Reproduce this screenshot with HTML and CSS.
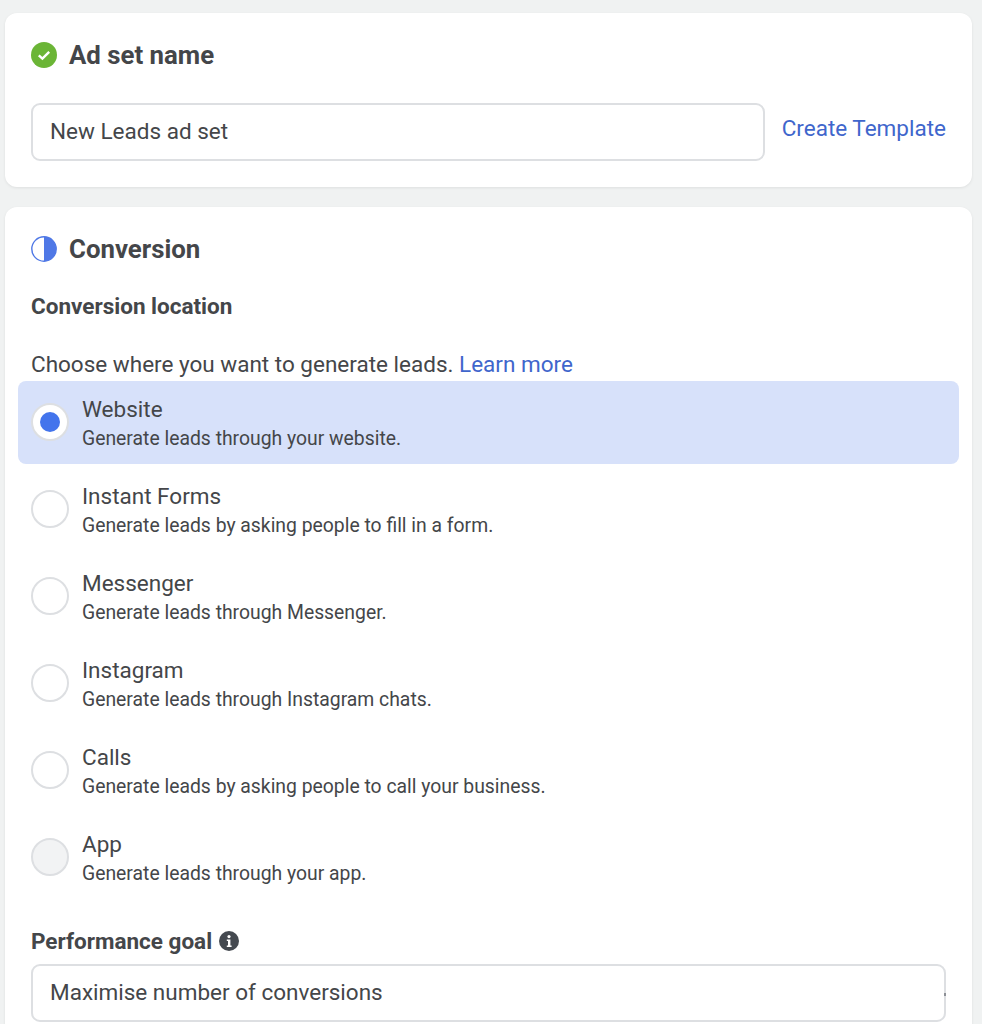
FILE: index.html
```html
<!DOCTYPE html>
<html lang="en">
<head>
  <meta charset="UTF-8" />
  <meta name="viewport" content="width=device-width, initial-scale=1.0" />
  <title>Ad set</title>
  <link rel="stylesheet" href="styles.css">
</head>
<body>
  <div class="card card-name">
    <div class="card-title">
      <svg class="title-icon" viewBox="0 0 26 26">
        <circle cx="13" cy="13" r="13" fill="#6bb536" />
        <path d="M7.8 13.4l3.6 3.3 6.8-6.8" fill="none" stroke="#fff" stroke-width="2.4" />
      </svg>
      <h2>Ad set name</h2>
    </div>
    <div class="name-row">
      <div class="field">New Leads ad set</div>
      <a class="link template-link">Create Template</a>
    </div>
  </div>

  <div class="card card-conversion">
    <div class="card-title">
      <svg class="title-icon" viewBox="0 0 26 26">
        <circle cx="13" cy="13" r="12.2" fill="#fff" stroke="#4f78e6" stroke-width="1.4" />
        <path d="M13 0.8a12.2 12.2 0 0 1 0 24.4z" fill="#4f78e6" />
      </svg>
      <h2>Conversion</h2>
    </div>

    <h3 class="location-label">Conversion location</h3>
    <p class="hint">Choose where you want to generate leads. <a class="link">Learn more</a></p>

    <!-- Location options -->
    <div class="options">
      <div class="option selected">
        <span class="radio"></span>
        <div class="option-text">
          <div class="option-name">Website</div>
          <div class="option-desc">Generate leads through your website.</div>
        </div>
      </div>
      <div class="option">
        <span class="radio"></span>
        <div class="option-text">
          <div class="option-name">Instant Forms</div>
          <div class="option-desc">Generate leads by asking people to fill in a form.</div>
        </div>
      </div>
      <div class="option">
        <span class="radio"></span>
        <div class="option-text">
          <div class="option-name">Messenger</div>
          <div class="option-desc">Generate leads through Messenger.</div>
        </div>
      </div>
      <div class="option">
        <span class="radio"></span>
        <div class="option-text">
          <div class="option-name">Instagram</div>
          <div class="option-desc">Generate leads through Instagram chats.</div>
        </div>
      </div>
      <div class="option">
        <span class="radio"></span>
        <div class="option-text">
          <div class="option-name">Calls</div>
          <div class="option-desc">Generate leads by asking people to call your business.</div>
        </div>
      </div>
      <div class="option">
        <span class="radio disabled"></span>
        <div class="option-text">
          <div class="option-name">App</div>
          <div class="option-desc">Generate leads through your app.</div>
        </div>
      </div>
    </div>

    <div class="goal-label">
      <h3>Performance goal</h3>
      <svg class="info-icon" viewBox="0 0 20 20">
        <circle cx="10" cy="10" r="10" fill="#444950" />
        <circle cx="10" cy="5.6" r="1.6" fill="#fff" />
        <path d="M7.8 8.6h3.6v6h1.2v1.5H7.8v-1.5h1.2v-4.5H7.8z" fill="#fff" />
      </svg>
    </div>
    <div class="field goal-field">Maximise number of conversions</div>
  </div>
</body>
</html>
```

FILE: styles.css
```css
body {
  font-family: Roboto, "Liberation Sans", sans-serif;
  margin: 0;
  padding: 13px 10px 0 5px;
  height: 1011px;
  overflow: hidden;
  background: #f0f2f2;
  color: #444649;
}
.card {
  background: #fff;
  border-radius: 12px;
  box-shadow: 0 1px 3px rgba(0, 0, 0, 0.08);
  padding: 0 26px;
}
.card-name {
  height: 174px;
  margin-bottom: 20px;
}
.card-conversion {
  padding-bottom: 30px;
}
.card-title {
  display: flex;
  align-items: center;
  gap: 12px;
  height: 30px;
  padding-top: 27px;
}
.title-icon {
  width: 26px;
  height: 26px;
  flex: none;
}
h2 {
  margin: 0;
  font-size: 25.8px;
  font-weight: 700;
}
h3 {
  margin: 0;
  font-size: 22.5px;
  font-weight: 700;
}
.link {
  color: #3f66cc;
}
.name-row {
  display: flex;
  align-items: center;
  gap: 17px;
  margin-top: 33px;
}
.field {
  flex: 1;
  box-sizing: border-box;
  height: 58px;
  line-height: 53px;
  padding: 0 17px;
  border: 2px solid #dddfe2;
  border-radius: 9px;
  font-size: 22.5px;
  background: #fff;
}
.template-link {
  font-size: 22.5px;
  margin-top: -8px;
}
.location-label {
  margin-top: 29px;
  line-height: 26px;
}
.hint {
  margin: 32px 0 0;
  font-size: 22.5px;
  line-height: 26px;
}
.options {
  margin: 4px 0 0 -13px;
  width: 941px;
}
.option {
  display: flex;
  align-items: flex-start;
  gap: 13px;
  box-sizing: border-box;
  height: 83px;
  margin-bottom: 4px;
  padding: 15px 13px 0;
  border-radius: 8px;
}
.option.selected {
  background: #d7e1fa;
}
.radio {
  width: 38px;
  height: 38px;
  box-sizing: border-box;
  margin-top: 7px;
  flex: none;
  display: flex;
  align-items: center;
  justify-content: center;
  background: #fff;
  border: 2px solid #dddfe2;
  border-radius: 50%;
}
.selected .radio::after {
  content: "";
  width: 20px;
  height: 20px;
  border-radius: 50%;
  background: #4374ec;
}
.radio.disabled {
  background: #f2f3f4;
}
.option-name {
  font-size: 22.5px;
  line-height: 26px;
}
.option-desc {
  margin-top: 5px;
  font-size: 19.35px;
  line-height: 24px;
}
.goal-label {
  display: flex;
  align-items: center;
  gap: 7px;
  margin-top: 29px;
  height: 26px;
}
.info-icon {
  width: 20px;
  height: 20px;
}
.goal-field {
  position: relative;
  margin-top: 10px;
}
/* clipped select arrow on the field's edge */
.goal-field::after {
  content: "";
  position: absolute;
  right: -2px;
  top: 27px;
  width: 2px;
  height: 3px;
  background: #8d9096;
}
```
